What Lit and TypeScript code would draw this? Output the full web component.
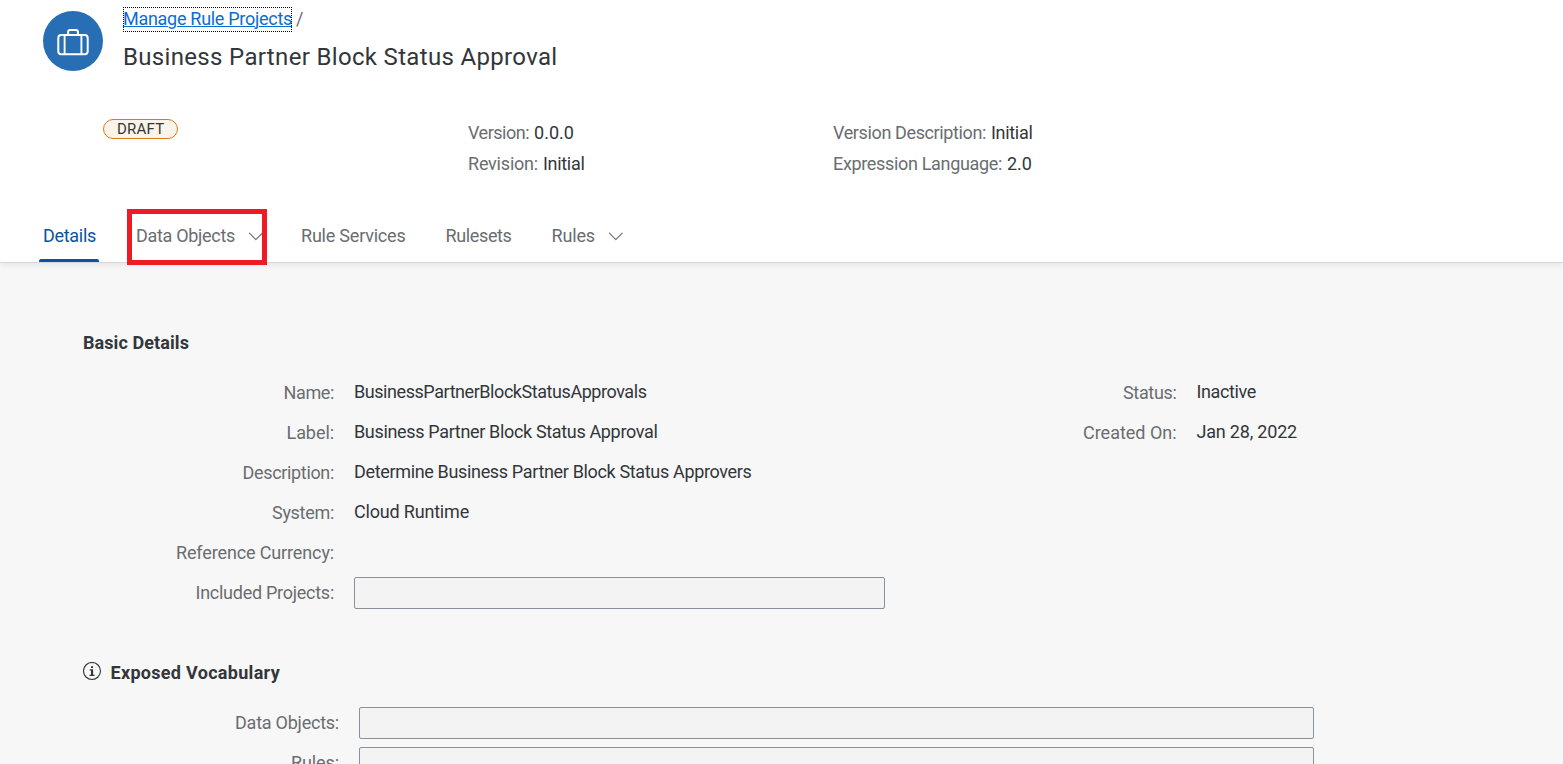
import { LitElement, html, css } from "lit";
import { customElement, property } from "lit/decorators.js";

/** A single-line text run whose tracking is tuned so that it spans `w` pixels. */
@customElement("fit-text")
class FitText extends LitElement {
  @property({ type: Number }) w = 0;
  @property() text = "";
  static styles = css`
    :host { display: inline-block; white-space: nowrap; text-decoration: inherit; }
    span { text-decoration: inherit; }
  `;
  render() {
    return html`<span>${this.text}</span>`;
  }
  updated() {
    const span = this.renderRoot.querySelector("span") as HTMLElement;
    span.style.letterSpacing = "0px";
    const natural = span.getBoundingClientRect().width;
    if (this.w) span.style.letterSpacing = `${(this.w - natural) / this.text.length}px`;
  }
}

const t = (text: string, w: number) => html`<fit-text .text=${text} .w=${w}></fit-text>`;

const chevron = html`<svg class="chevron" width="16" height="10" viewBox="0 0 16 10">
  <path d="M1.4 1.2 L7.8 7.6 L14.2 1.2" fill="none" stroke="currentColor" stroke-width="1.1" stroke-linecap="round" stroke-linejoin="round"/>
</svg>`;

@customElement("app-root")
export class AppRoot extends LitElement {
  static styles = css`
    :host {
      display: flex; flex-direction: column; height: 764px; overflow: hidden;
      background: #f7f7f7; color: #32363a;
      font: 18px/24px Roboto, "Liberation Sans", sans-serif;
    }
    * { box-sizing: border-box; }
    header {
      flex: none; height: 263px; background: #fff; border-bottom: 1px solid #d9d9d9;
      box-shadow: 0 2px 6px rgba(0, 0, 0, 0.08); display: flex; flex-direction: column;
    }
    .top { display: flex; gap: 20px; padding: 7px 0 0 43px; height: 119px; }
    .avatar {
      width: 60px; height: 60px; border-radius: 50%; background: #286eb4; margin-top: 4px;
    }
    .crumb { display: flex; gap: 4px; color: #6a6d70; height: 25px; }
    .link {
      color: #0a6ed1; outline: 1px dotted #000; outline-offset: -1px; height: 25px; width: 169px;
      text-decoration: underline 1px; text-underline-offset: 1px; text-decoration-skip-ink: auto;
    }
    .title { margin: 9px 0 0; font-size: 24px; line-height: 32px; font-weight: 400; }
    .facts { display: grid; grid-template-columns: 365px 365px 1fr; padding-left: 103px; height: 90px; }
    .draft {
      width: 75px; height: 20px; border: 1px solid #d57e1b; border-radius: 10px; background: #fef3e8;
      font-size: 15px; line-height: 18px; padding-left: 13px;
    }
    .facts dl { margin: 2px 0 0; }
    .facts dl div { display: flex; gap: 5px; height: 31px; }
    dt { color: #6a6d70; }
    dd { margin: 0; }
    nav { display: flex; height: 53px; padding-left: 39px; color: #6a6d70; }
    .tab { height: 53px; padding: 15px 4px 0; display: flex; }
    .tab.selected { color: #0854a0; width: 60px; position: relative; }
    .tab.selected::after {
      content: ""; position: absolute; left: 0; right: 0; bottom: 0; height: 3px;
      background: #0854a0; border-radius: 2px 2px 0 0;
    }
    .tab.marked {
      flex: none; width: 140px; height: 56px; margin: 0 30px 0 28px; padding: 10px 0 0 4px;
      border: 5px solid #ed1c24; overflow: hidden; position: relative;
    }
    .chevron { flex: none; margin: 8px 0 0 13px; }
    .services { width: 144.5px; }
    .rulesets { width: 106px; }
    main { padding: 68px 0 0 83px; }
    h2 { margin: 0; font-size: 18px; line-height: 24px; font-weight: 700; display: flex; }
    .columns { display: flex; margin-top: 17px; }
    .form { display: grid; grid-auto-rows: 40px; column-gap: 20px; }
    .form dt { text-align: right; padding-top: 9px; }
    .form dd { padding-top: 8px; }
    .left { grid-template-columns: 251px 531px; margin: 0; }
    .right { grid-template-columns: 291.5px 200px; margin: 0; }
    .vocab { grid-template-columns: 256px 955px; margin: 17px 0 0; }
    .form dd.box { padding-top: 5px; }
    .field { height: 32px; border: 1px solid #89919a; border-radius: 2px; background: #f3f3f3; }
    .exposed { margin-top: 49px; }
    .info { margin: 1px 8.5px 0 0; }
  `;

  row(label: string, lw: number, value = "", vw = 0) {
    return html`<dt>${t(label, lw)}</dt><dd>${value ? t(value, vw) : ""}</dd>`;
  }

  fieldRow(label: string, lw: number) {
    return html`<dt>${t(label, lw)}</dt><dd class="box"><div class="field"></div></dd>`;
  }

  render() {
    return html`
      <header>
        <div class="top">
          <div class="avatar">
            <svg width="60" height="60" viewBox="0 0 60 60" fill="none" stroke="#fff">
              <rect x="15.3" y="24" width="29.4" height="19.2" rx="3" stroke-width="2"/>
              <path d="M25.1 23.5V21Q25.1 19 27.1 19H32.9Q34.9 19 34.9 21V23.5" stroke-width="2"/>
              <path d="M21.6 24V43M38.4 24V43" stroke-width="1.9"/>
            </svg>
          </div>
          <div>
            <div class="crumb"><a class="link">${t("Manage Rule Projects", 169)}</a><span>/</span></div>
            <h1 class="title">${t("Business Partner Block Status Approval", 434.5)}</h1>
          </div>
        </div>
        <div class="facts">
          <div class="draft">${t("DRAFT", 47.5)}</div>
          <dl>
            <div><dt>${t("Version:", 61)}</dt><dd>${t("0.0.0", 40)}</dd></div>
            <div><dt>${t("Revision:", 70)}</dt><dd>${t("Initial", 41.5)}</dd></div>
          </dl>
          <dl>
            <div><dt>${t("Version Description:", 153)}</dt><dd>${t("Initial", 41.5)}</dd></div>
            <div><dt>${t("Expression Language:", 169)}</dt><dd>${t("2.0", 25)}</dd></div>
          </dl>
        </div>
        <nav>
          <div class="tab selected">${t("Details", 53)}</div>
          <div class="tab marked">${t("Data Objects", 99)}${chevron}</div>
          <div class="tab services">${t("Rule Services", 104.5)}</div>
          <div class="tab rulesets">${t("Rulesets", 66)}</div>
          <div class="tab">${t("Rules", 43.5)}${chevron}</div>
        </nav>
      </header>
      <main>
        <h2>${t("Basic Details", 106)}</h2>
        <div class="columns">
          <dl class="form left">
            ${this.row("Name:", 50.5, "BusinessPartnerBlockStatusApprovals", 292.5)}
            ${this.row("Label:", 47.5, "Business Partner Block Status Approval", 303.5)}
            ${this.row("Description:", 91.5, "Determine Business Partner Block Status Approvers", 397.5)}
            ${this.row("System:", 62, "Cloud Runtime", 115)}
            ${this.row("Reference Currency:", 158)}
            ${this.fieldRow("Included Projects:", 138.5)}
          </dl>
          <dl class="form right">
            ${this.row("Status:", 53.5, "Inactive", 59.5)}
            ${this.row("Created On:", 93.5, "Jan 28, 2022", 100.5)}
          </dl>
        </div>
        <h2 class="exposed">
          <svg class="info" width="19" height="19" viewBox="0 0 19 19">
            <circle cx="9" cy="9" r="8.5" fill="none" stroke="#32363a" stroke-width="1.1"/>
            <path d="M8 4.2H10.1V6.1H8ZM6.7 7.3H10.1V12.7H11.6V13.9H6.5V12.7H8V8.5H6.7Z" fill="#32363a"/>
          </svg>
          ${t("Exposed Vocabulary", 169.5)}
        </h2>
        <dl class="form vocab">
          ${this.fieldRow("Data Objects:", 104)}
          ${this.fieldRow("Rules:", 48)}
        </dl>
      </main>
    `;
  }
}
